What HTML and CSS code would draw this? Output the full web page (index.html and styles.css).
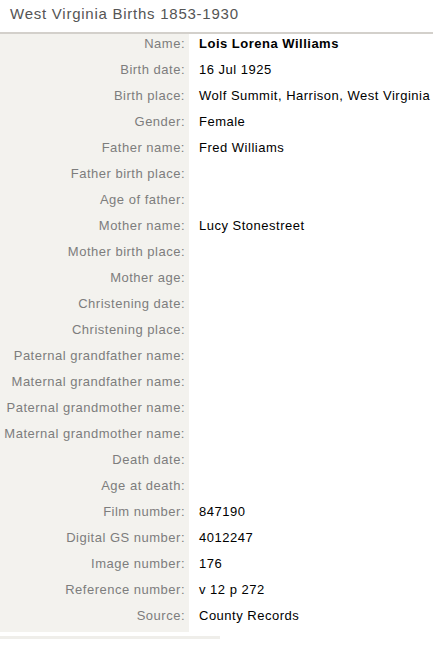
FILE: index.html
```html
<!DOCTYPE html>
<html>
<head>
<meta charset="utf-8">
<link rel="stylesheet" href="styles.css">
</head>
<body>
<div class="record">
  <h1 class="title">West Virginia Births 1853-1930</h1>
  <table class="fields">
    <tr><th>Name:</th><td class="strong">Lois Lorena Williams</td></tr>
    <tr><th>Birth date:</th><td>16 Jul 1925</td></tr>
    <tr><th>Birth place:</th><td>Wolf Summit, Harrison, West Virginia</td></tr>
    <tr><th>Gender:</th><td>Female</td></tr>
    <tr><th>Father name:</th><td>Fred Williams</td></tr>
    <tr><th>Father birth place:</th><td></td></tr>
    <tr><th>Age of father:</th><td></td></tr>
    <tr><th>Mother name:</th><td>Lucy Stonestreet</td></tr>
    <tr><th>Mother birth place:</th><td></td></tr>
    <tr><th>Mother age:</th><td></td></tr>
    <tr><th>Christening date:</th><td></td></tr>
    <tr><th>Christening place:</th><td></td></tr>
    <tr><th>Paternal grandfather name:</th><td></td></tr>
    <tr><th>Maternal grandfather name:</th><td></td></tr>
    <tr><th>Paternal grandmother name:</th><td></td></tr>
    <tr><th>Maternal grandmother name:</th><td></td></tr>
    <tr><th>Death date:</th><td></td></tr>
    <tr><th>Age at death:</th><td></td></tr>
    <tr><th>Film number:</th><td>847190</td></tr>
    <tr><th>Digital GS number:</th><td>4012247</td></tr>
    <tr><th>Image number:</th><td>176</td></tr>
    <tr><th>Reference number:</th><td>v 12 p 272</td></tr>
    <tr><th>Source:</th><td>County Records</td></tr>
  </table>
  <div class="footer-rule"></div>
</div>
</body>
</html>
```
FILE: styles.css
```css
html, body {
  margin: 0;
  padding: 0;
  background: #ffffff;
}
body {
  font-family: "Liberation Sans", Arial, sans-serif;
}
.record {
  width: 433px;
}
.title {
  margin: 0;
  padding: 5px 0 0 10px;
  height: 27px;
  font-size: 15px;
  font-weight: normal;
  line-height: 18px;
  letter-spacing: 0.75px;
  color: #555555;
  border-bottom: 2px solid #d3d0cb;
}
.fields {
  width: 433px;
  border-collapse: collapse;
  border-spacing: 0;
  font-size: 13px;
  letter-spacing: 0.5px;
}
.fields th,
.fields td {
  height: 20px;
  padding-top: 0;
  padding-bottom: 6px;
  line-height: 20px;
  vertical-align: middle;
  white-space: nowrap;
}
.fields th {
  width: 185px;
  padding-left: 0;
  padding-right: 4px;
  text-align: right;
  font-weight: normal;
  color: #7d7d7d;
  background: #f3f2ee;
}
.fields td {
  padding-left: 10px;
  padding-right: 0;
  color: #000000;
}
.fields td.strong {
  font-weight: bold;
}
.footer-rule {
  margin-top: 4px;
  width: 220px;
  height: 3px;
  background: #efeeea;
}
```
